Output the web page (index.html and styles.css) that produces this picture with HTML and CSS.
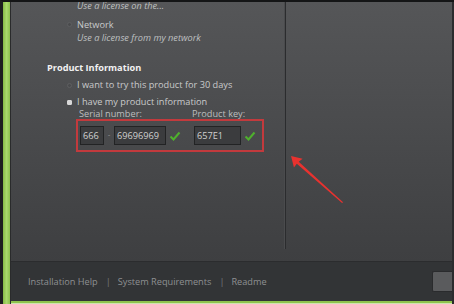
FILE: index.html
```html
<!DOCTYPE html>
<html lang="en">
<head>
  <meta charset="UTF-8">
  <title>Product Information</title>
  <link rel="stylesheet" href="styles.css">
</head>
<body>

<div class="installer">
  <div class="installer-edge"></div>
  <div class="installer-main">
    <div class="installer-body">
      <div class="license-panel">
        <div class="license-option">
          <div class="license-sub cut">Use a license on the...</div>
        </div>
        <div class="license-option">
          <div class="radio-row"><span class="radio"></span>Network</div>
          <div class="license-sub">Use a license from my network</div>
        </div>

        <h3 class="license-title">Product Information</h3>
        <div class="radio-row try-row"><span class="radio"></span>I want to try this product for 30 days</div>
        <div class="radio-row have-row"><span class="radio checked"></span>I have my product information</div>

        <div class="serial-labels">
          <span class="label-serial">Serial number:</span>
          <span class="label-key">Product key:</span>
        </div>
        <div class="serial-box">
          <span class="field f-prefix">666</span>
          <span class="dash">-</span>
          <span class="field f-serial">69696969</span>
          <svg class="check" viewBox="0 0 12 12"><path d="M1.5 6.5 L4.5 9.5 L10.5 2.5" /></svg>
          <span class="field f-key">657E1</span>
          <svg class="check" viewBox="0 0 12 12"><path d="M1.5 6.5 L4.5 9.5 L10.5 2.5" /></svg>
        </div>
      </div>
      <div class="divider"></div>
      <div class="side-panel">
        <svg class="arrow" viewBox="0 0 60 54">
          <path d="M2 2 L14 5 L10 8 L56 50 L55 51 L8 10 L5 14 Z" />
        </svg>
      </div>
    </div>
    <div class="installer-footer">
      <a class="footer-link">Installation Help</a>
      <span class="footer-sep">|</span>
      <a class="footer-link">System Requirements</a>
      <span class="footer-sep">|</span>
      <a class="footer-link">Readme</a>
      <button class="footer-btn"></button>
    </div>
    <div class="installer-bottom"></div>
  </div>
</div>

</body>
</html>
```

FILE: styles.css
```css
* {
  margin: 0;
  padding: 0;
  box-sizing: border-box;
}

body {
  width: 454px;
  height: 304px;
  overflow: hidden;
  background-color: #e9eef0;
  font-family: "Open Sans", "Noto Sans", sans-serif;
  font-size: 9.2px;
  color: #c9cacb;
}

.installer {
  display: flex;
  height: 304px;
  border-top: 2px solid #141516;
  border-left: 3px solid #1d1e1f;
}

.installer-edge {
  width: 8px;
  background: linear-gradient(to right, #86bb45, #a9d86c 50%, #8cc04c);
  border-right: 1px solid #2a2b2c;
}

.installer-main {
  flex: 1;
  display: flex;
  flex-direction: column;
  border-right: 2px solid #2b2c2e;
}

.installer-body {
  flex: 1;
  display: flex;
  background: linear-gradient(to bottom, #555658, #3e3f41);
  padding-bottom: 12px;
  overflow: hidden;
}

.license-panel {
  width: 273px;
  padding-left: 36px;
  overflow: hidden;
}

.license-option {
  padding-left: 20px;
}

.license-sub {
  font-style: italic;
  color: #bfc0c1;
  padding-left: 10px;
  line-height: 13px;
}

.license-sub.cut {
  margin-top: -3px;
}

.radio-row {
  display: flex;
  align-items: center;
  line-height: 13px;
  margin-top: 6px;
}

.radio {
  width: 5px;
  height: 5px;
  border-radius: 50%;
  background-color: #4a4b4d;
  border: 1px solid #5e5f61;
  margin-right: 5px;
}

.radio.checked {
  background-color: #d8d8d8;
  border-color: #d8d8d8;
  border-radius: 1px;
}

.license-title {
  font-size: 9.2px;
  font-weight: 700;
  color: #f2f2f2;
  line-height: 13px;
  margin-top: 17px;
  margin-bottom: 5px;
}

.try-row,
.have-row {
  padding-left: 20px;
  margin-top: 5px;
  line-height: 12px;
}

.serial-labels {
  display: flex;
  padding-left: 32px;
  line-height: 11px;
  color: #bdbebf;
}

.label-serial {
  width: 113px;
}

.serial-box {
  display: flex;
  align-items: center;
  width: 188px;
  height: 33px;
  margin-left: 29px;
  padding-left: 2px;
  border: 2px solid #c23a3d;
}

.field {
  height: 19px;
  line-height: 17px;
  padding-left: 2px;
  background-color: #3b3c3e;
  border: 1px solid #222324;
  color: #d0d0d0;
}

.f-prefix {
  width: 24px;
}

.dash {
  width: 10px;
  text-align: center;
  color: #999;
  font-size: 8px;
  margin-top: -4px;
}

.f-serial {
  width: 52px;
}

.f-key {
  width: 47px;
  margin-left: 13px;
}

.check {
  width: 12px;
  height: 12px;
  margin-left: 3px;
}

.check path {
  fill: none;
  stroke: #4fb02d;
  stroke-width: 2;
}

.divider {
  width: 2px;
  background-color: #2b2c2e;
  border-left: 1px solid #4a4b4d;
}

.side-panel {
  flex: 1;
  position: relative;
}

.arrow {
  position: absolute;
  left: 3px;
  top: 152px;
  width: 58px;
  height: 52px;
}

.arrow path {
  fill: #e8322f;
}

.installer-footer {
  height: 40px;
  display: flex;
  align-items: center;
  padding-left: 17px;
  background-color: #323436;
  border-top: 1px solid #2b2c2e;
  color: #8e9092;
  font-size: 9.2px;
}

.footer-sep {
  margin: 0 7px 0 8px;
  color: #77797b;
}

.footer-btn {
  margin-left: auto;
  width: 20px;
  height: 21px;
  background-color: #5a5b5d;
  border: 1px solid #2a2b2d;
  border-right: none;
  border-radius: 2px 0 0 2px;
}

.installer-bottom {
  height: 3px;
  background-color: #8fc34d;
  border-bottom: 1px solid #cfe3b0;
}
```
